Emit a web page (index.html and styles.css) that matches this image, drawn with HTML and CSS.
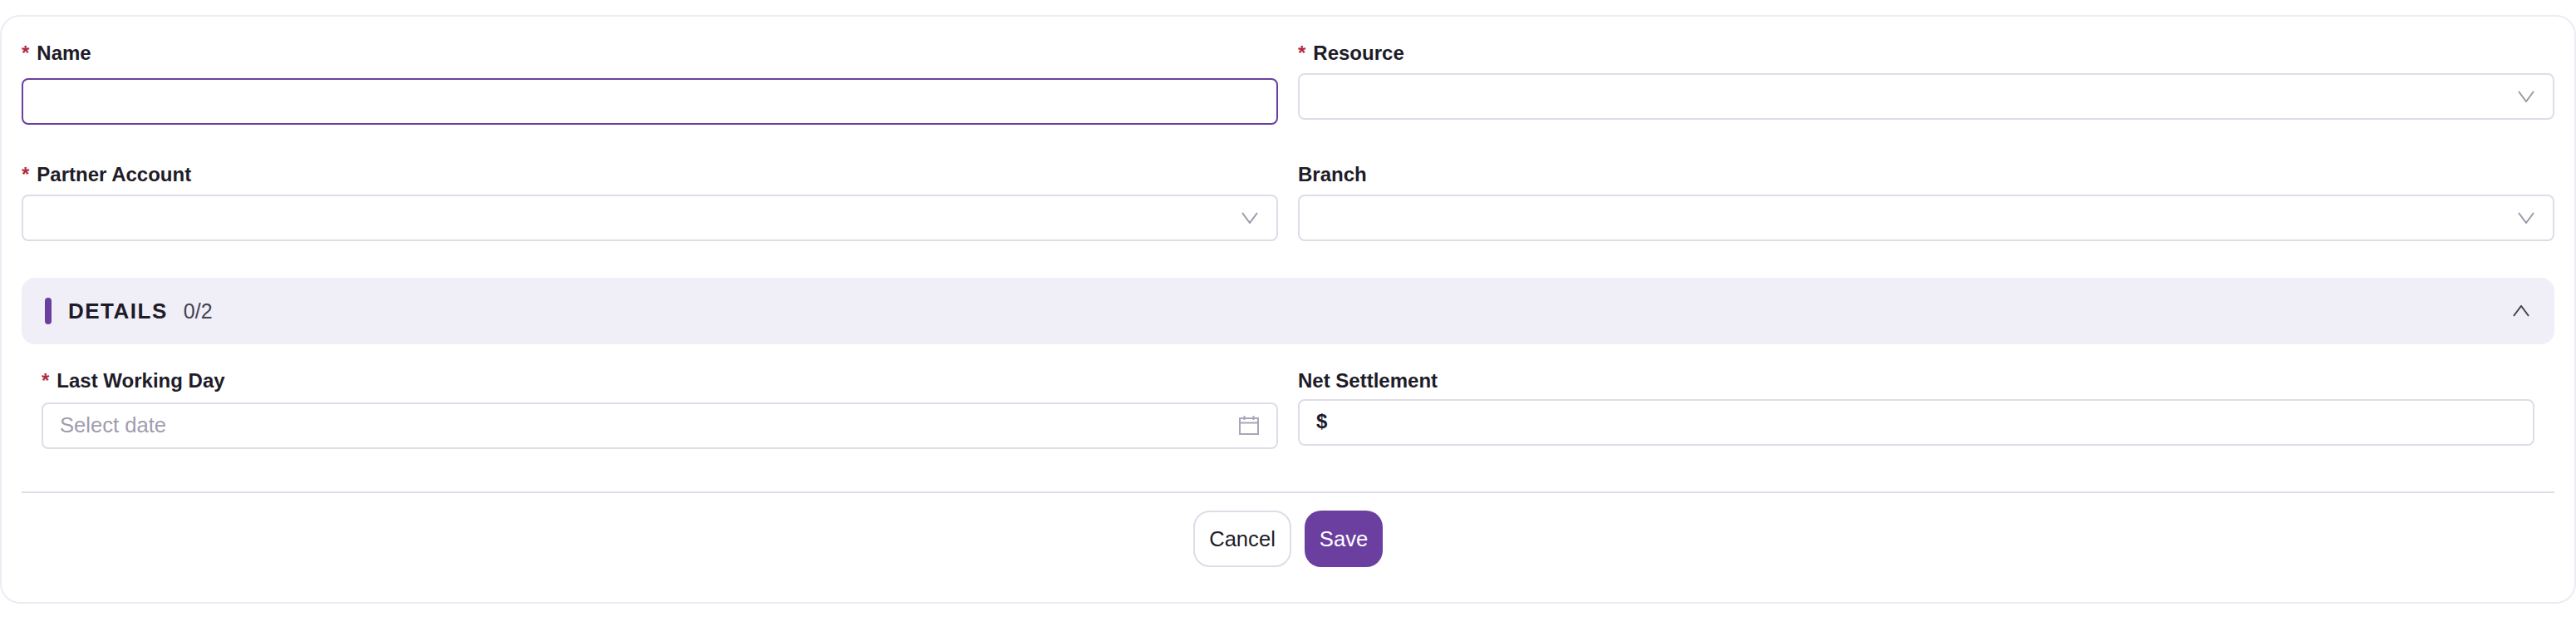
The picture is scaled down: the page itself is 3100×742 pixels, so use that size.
FILE: index.html
```html
<!DOCTYPE html>
<html lang="en">
<head>
    <meta charset="UTF-8">
    <title>Add Record</title>
    <link rel="stylesheet" href="styles.css">
</head>
<body>
    <form class="card">
        <div class="grid">
            <div class="field field-focused">
                <label class="label"><span class="star">*</span>Name</label>
                <div class="control control-focused"><input class="input" type="text"></div>
            </div>
            <div class="field">
                <label class="label"><span class="star">*</span>Resource</label>
                <div class="control">
                    <span class="grow"></span>
                    <svg class="chevron" viewBox="0 0 20 14"><path d="M1 1l9 12 9-12"/></svg>
                </div>
            </div>
            <div class="field">
                <label class="label"><span class="star">*</span>Partner Account</label>
                <div class="control">
                    <span class="grow"></span>
                    <svg class="chevron" viewBox="0 0 20 14"><path d="M1 1l9 12 9-12"/></svg>
                </div>
            </div>
            <div class="field">
                <label class="label">Branch</label>
                <div class="control">
                    <span class="grow"></span>
                    <svg class="chevron" viewBox="0 0 20 14"><path d="M1 1l9 12 9-12"/></svg>
                </div>
            </div>
        </div>

        <div class="section-head">
            <span class="section-bar"></span>
            <span class="section-title">DETAILS</span>
            <span class="section-count">0/2</span>
            <svg class="chevron-up" viewBox="0 0 20 14"><path d="M1 13l9-12 9 12"/></svg>
        </div>

        <div class="details">
            <div class="field date-field">
                <label class="label"><span class="star">*</span>Last Working Day</label>
                <div class="control">
                    <input class="input" type="text" placeholder="Select date">
                    <svg class="calendar" viewBox="0 0 24 24">
                        <path d="M1 4h22v19H1zM1 9.500h22M6.500 1v5M17.500 1v5"/>
                    </svg>
                </div>
            </div>
            <div class="field">
                <label class="label">Net Settlement</label>
                <div class="control">
                    <span class="prefix">$</span>
                    <input class="input" type="text">
                </div>
            </div>
        </div>

        <div class="actions">
            <button class="btn btn-cancel" type="button">Cancel</button>
            <button class="btn btn-save" type="button">Save</button>
        </div>
    </form>
</body>
</html>
```

FILE: styles.css
```css
* {
    box-sizing: border-box;
}
body {
    margin: 0;
    padding-top: 18px;
    background: #fff;
    color: #1e1c28;
    font-family: "Liberation Sans", Arial, sans-serif;
}
.card {
    height: 708px;
    padding: 24px 24px 0;
    border: 2px solid #edebf3;
    border-radius: 24px;
    background: #fff;
}
.grid {
    display: grid;
    grid-template-columns: 1fr 1fr;
    column-gap: 24px;
    row-gap: 40px;
    align-items: start;
}
.label {
    display: block;
    height: 36px;
    margin-bottom: 8px;
    font-size: 24px;
    font-weight: 700;
    line-height: 40px;
}
.star {
    margin-right: 9px;
    color: #b3293e;
    font-weight: 700;
}
.field-focused .label {
    margin-bottom: 14px;
}
.control {
    display: flex;
    align-items: center;
    height: 56px;
    padding: 0 20px;
    border: 2px solid #dfdce8;
    border-radius: 8px;
    background: #fff;
}
.control-focused {
    border-color: #6b3fa0;
}
.input {
    flex: 1;
    min-width: 0;
    margin-bottom: 2px;
    padding: 0;
    border: 0;
    outline: 0;
    background: transparent;
    color: #1e1c28;
    font-family: inherit;
    font-size: 25.600px;
}
.input::placeholder {
    color: #a09dae;
    opacity: 1;
}
.grow {
    flex: 1;
}
.chevron, .chevron-up {
    width: 20px;
    height: 14px;
    fill: none;
    stroke-width: 2;
}
.chevron {
    margin-right: 2px;
    stroke: #9b98a8;
}
.chevron-up {
    margin-left: auto;
    stroke: #45424f;
}
.calendar {
    width: 24px;
    height: 24px;
    margin-right: 1px;
    margin-bottom: 3px;
    fill: none;
    stroke: #a9a6b5;
    stroke-width: 2;
}
.section-head {
    display: flex;
    align-items: center;
    height: 80px;
    margin-top: 44px;
    padding: 0 30px 0 28px;
    border-radius: 16px;
    background: #f0eef7;
}
.section-bar {
    width: 8px;
    height: 32px;
    margin-right: 20px;
    border-radius: 4px;
    background: #6b3fa0;
}
.section-title {
    margin-right: 19px;
    font-size: 26px;
    font-weight: 700;
    letter-spacing: 1.500px;
}
.section-count {
    color: #45424f;
    font-size: 25px;
}
.details {
    display: grid;
    grid-template-columns: 1fr 1fr;
    column-gap: 24px;
    align-items: start;
    height: 179px;
    padding: 25px 24px 0;
    border-bottom: 2px solid #dfdce8;
}
.details .label {
    height: 32px;
    margin-bottom: 9px;
    line-height: 38px;
}
.details .date-field .label {
    margin-bottom: 13px;
}
.prefix {
    margin-right: 12px;
    margin-bottom: 2px;
    font-size: 24px;
    font-weight: 700;
}
.actions {
    display: flex;
    justify-content: center;
    gap: 16px;
    margin-top: 21px;
}
.btn {
    height: 68px;
    padding: 0;
    border-radius: 20px;
    font-family: inherit;
    font-size: 25.600px;
}
.btn-cancel {
    width: 118px;
    border: 2px solid #dfdce8;
    background: #fff;
    color: #1e1c28;
}
.btn-save {
    width: 94px;
    border: 0;
    background: #6b3fa0;
    color: #fff;
}
```
